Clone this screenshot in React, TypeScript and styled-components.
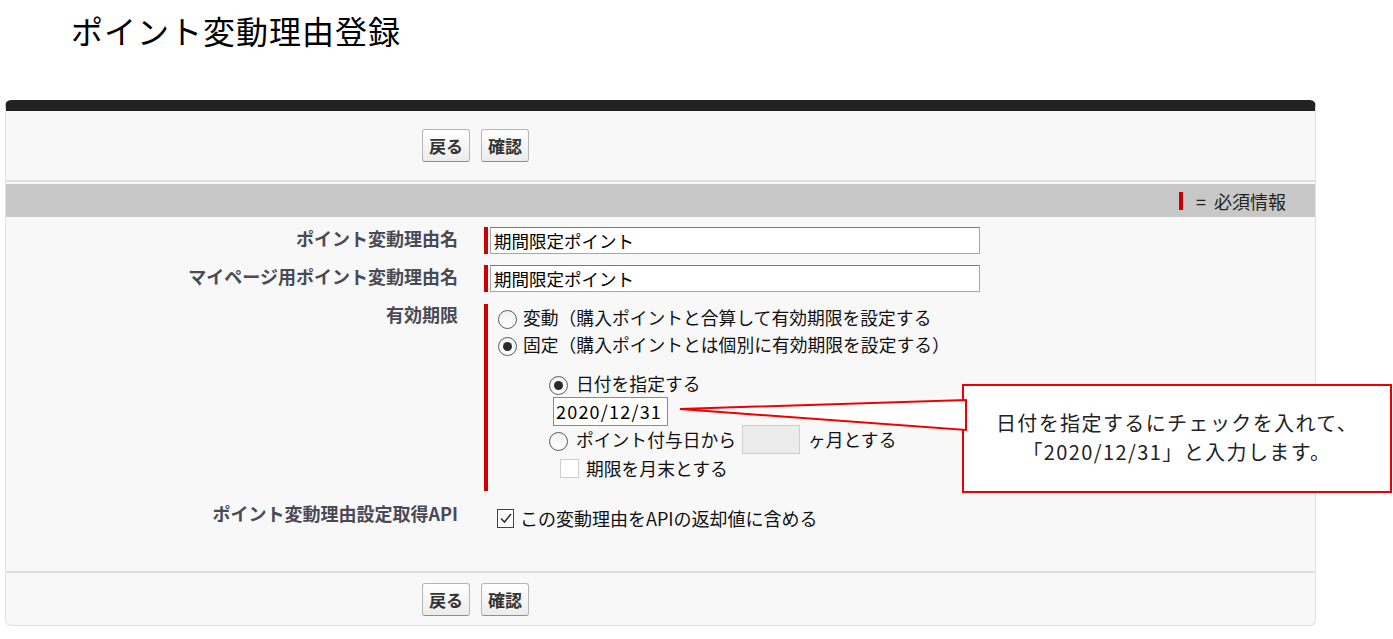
import React from 'react'
import styled, { createGlobalStyle } from 'styled-components'

const GlobalStyle = createGlobalStyle`
  html, body {
    margin: 0;
    padding: 0;
    background: #ffffff;
  }
  body {
    font-family: 'Noto Sans CJK JP', 'Noto Sans', 'Liberation Sans', sans-serif;
    color: #000;
  }
`

const FONT = `'Noto Sans CJK JP', 'Noto Sans', 'Liberation Sans', sans-serif`

export default function App() {
  return (
    <Page>
      <GlobalStyle />
      <Title>ポイント変動理由登録</Title>
      <Panel>
        <ButtonRow $top>
          <Button>戻る</Button>
          <Button>確認</Button>
        </ButtonRow>
        <SectionHeader>
          <Legend>
            <RequiredMark />
            <span>= 必須情報</span>
          </Legend>
        </SectionHeader>
        <Form>
          <Label>ポイント変動理由名</Label>
          <Field>
            <RequiredMark $tall />
            <TextInput>期間限定ポイント</TextInput>
          </Field>

          <Label>マイページ用ポイント変動理由名</Label>
          <Field>
            <RequiredMark $tall />
            <TextInput>期間限定ポイント</TextInput>
          </Field>

          <Label>有効期限</Label>
          <RequiredBlock>
            <OptionLine>
              <Radio />
              <span>変動（購入ポイントと合算して有効期限を設定する</span>
            </OptionLine>
            <OptionLine>
              <Radio $checked />
              <span>固定（購入ポイントとは個別に有効期限を設定する）</span>
            </OptionLine>
            <Nested>
              <OptionLine $gap={8}>
                <Radio $checked />
                <span>日付を指定する</span>
              </OptionLine>
              <DateInput>2020/12/31</DateInput>
              <OptionLine $gap={8}>
                <Radio />
                <span>ポイント付与日から</span>
                <MonthInput />
                <span>ヶ月とする</span>
              </OptionLine>
              <CheckLine>
                <CheckBox />
                <span>期限を月末とする</span>
              </CheckLine>
            </Nested>
          </RequiredBlock>

          <Label>ポイント変動理由設定取得API</Label>
          <ApiField>
            <CheckBox $checked>
              <svg width="14" height="14" viewBox="0 0 14 14">
                <path d="M2 7.5 L5.5 11 L12 3" fill="none" stroke="#333" strokeWidth="1.6" />
              </svg>
            </CheckBox>
            <span>この変動理由をAPIの返却値に含める</span>
          </ApiField>
        </Form>
        <ButtonRow>
          <Button>戻る</Button>
          <Button>確認</Button>
        </ButtonRow>
      </Panel>

      <Callout>
        <Pointer width="290" height="40" viewBox="0 0 290 40">
          <polygon points="2,25 288,16 288,46" fill="#fff" stroke="#ee0000" strokeWidth="2" />
        </Pointer>
        <CalloutText>
          <CalloutLine>日付を指定するにチェックを入れて、</CalloutLine>
          <CalloutLine>「2020/12/31」と入力します。</CalloutLine>
        </CalloutText>
      </Callout>
    </Page>
  )
}

const Page = styled.div`
  position: relative;
  width: 1393px;
  height: 639px;
  overflow: hidden;
  background: #fff;
`

const Title = styled.h1`
  margin: 0;
  box-sizing: border-box;
  height: 100px;
  padding: 10px 0 0 71px;
  font-family: ${FONT};
  font-size: 32px;
  line-height: 40px;
  font-weight: 400;
  color: #000;
  letter-spacing: 1px;
`

const Panel = styled.div`
  box-sizing: border-box;
  width: 1311px;
  margin-left: 5px;
  background: #f8f8f8;
  border: 1px solid #e2e2e2;
  border-top: 11px solid #222;
  border-radius: 6px;
`

const ButtonRow = styled.div<{ $top?: boolean }>`
  display: flex;
  gap: 11px;
  box-sizing: border-box;
  padding-left: 416px;
  height: ${({ $top }) => ($top ? '71px' : '54px')};
  padding-top: ${({ $top }) => ($top ? '18px' : '10px')};
  ${({ $top }) =>
    $top
      ? 'border-bottom: 2px solid #dedede;'
      : 'border-top: 2px solid #dedede;'}
`

const Button = styled.button`
  height: 33px;
  padding: 0 6px;
  font-family: ${FONT};
  font-size: 17px;
  font-weight: 700;
  color: #333;
  background: linear-gradient(#ffffff, #ececec);
  border: 1px solid #b5b5b5;
  border-bottom-color: #8f8f8f;
  border-radius: 3px;
  line-height: 1;
`

const SectionHeader = styled.div`
  display: flex;
  justify-content: flex-end;
  align-items: center;
  height: 33px;
  margin-top: 2px;
  padding-right: 29px;
  background: #c8c8c8;
`

const Legend = styled.div`
  display: flex;
  align-items: center;
  gap: 13px;
  font-family: ${FONT};
  font-size: 18px;
  color: #222;
  word-spacing: 4px;
`

const RequiredMark = styled.span<{ $tall?: boolean }>`
  display: block;
  width: 4px;
  height: ${({ $tall }) => ($tall ? '27px' : '18px')};
  background: #c00;
  flex-shrink: 0;
`

const Form = styled.div`
  display: grid;
  grid-template-columns: 452px 1fr;
  column-gap: 26px;
  row-gap: 11px;
  padding: 10px 0 40px;
`

const Label = styled.div`
  text-align: right;
  font-family: ${FONT};
  font-size: 18px;
  line-height: 22px;
  font-weight: 700;
  color: #4a4a56;
`

const Field = styled.div`
  display: flex;
  align-items: flex-start;
  gap: 2px;
`

const TextInput = styled.div`
  box-sizing: border-box;
  width: 490px;
  height: 27px;
  padding: 0 3px;
  background: #fff;
  border: 1px solid #a5a5a5;
  border-top-color: #7a7a7a;
  font-family: ${FONT};
  font-size: 17.5px;
  line-height: 25px;
  color: #000;
`

const RequiredBlock = styled.div`
  border-left: 4px solid #c00;
  padding: 0 0 8px 10px;
  margin-top: 1px;
  font-family: ${FONT};
  font-size: 17.8px;
  color: #111;
`

const OptionLine = styled.div<{ $gap?: number }>`
  display: flex;
  align-items: center;
  gap: ${({ $gap }) => $gap ?? 6}px;
  height: 27px;
  line-height: 27px;
  white-space: nowrap;
`

const Radio = styled.span<{ $checked?: boolean }>`
  position: relative;
  box-sizing: border-box;
  display: inline-block;
  width: 19px;
  height: 19px;
  margin-top: 4px;
  border-radius: 50%;
  border: 1px solid #5a5a5a;
  background: linear-gradient(#f2f2f2, #ffffff);
  flex-shrink: 0;

  &::after {
    content: '';
    display: ${({ $checked }) => ($checked ? 'block' : 'none')};
    position: absolute;
    left: 4px;
    top: 4px;
    width: 9px;
    height: 9px;
    border-radius: 50%;
    background: #2a2a2a;
  }
`

const Nested = styled.div`
  padding: 12px 0 0 51px;
`

const DateInput = styled.div`
  box-sizing: border-box;
  width: 115px;
  height: 29px;
  margin: 0 0 0 4px;
  padding: 0 2px;
  background: #fff;
  border: 1px solid #8a8a8a;
  font-size: 18px;
  letter-spacing: 1.2px;
  line-height: 27px;
  color: #000;
`

const MonthInput = styled.span`
  display: inline-block;
  box-sizing: border-box;
  width: 58px;
  height: 29px;
  margin: 0 0 0 -2px;
  background: #ececec;
  border: 1px solid #cfcfcf;
`

const CheckLine = styled.div`
  display: flex;
  align-items: center;
  gap: 7px;
  height: 30px;
  padding-left: 11px;
  white-space: nowrap;
`

const CheckBox = styled.span<{ $checked?: boolean }>`
  box-sizing: border-box;
  display: inline-flex;
  align-items: center;
  justify-content: center;
  width: ${({ $checked }) => ($checked ? '17px' : '19px')};
  height: 19px;
  background: #fff;
  border: 1px solid ${({ $checked }) => ($checked ? '#444' : '#cfcfcf')};
  flex-shrink: 0;
`

const ApiField = styled.div`
  display: flex;
  align-items: center;
  gap: 6px;
  padding: 3px 0 0 13px;
  font-family: ${FONT};
  font-size: 18px;
  color: #111;
  white-space: nowrap;
`

const Callout = styled.div`
  position: absolute;
  left: 962px;
  top: 384px;
  box-sizing: border-box;
  width: 430px;
  height: 109px;
  background: #fff;
  border: 2px solid #ee0000;
  display: flex;
  align-items: center;
  justify-content: center;
`

const Pointer = styled.svg`
  position: absolute;
  right: 100%;
  top: 0;
  margin-right: -4px;
  overflow: visible;
  transform: translateY(-2px);
`

const CalloutText = styled.div`
  position: relative;
  display: flex;
  flex-direction: column;
  align-items: center;
  margin-top: -3px;
`

const CalloutLine = styled.div`
  font-family: ${FONT};
  font-size: 20px;
  line-height: 29px;
  letter-spacing: 1.4px;
  color: #222;
  white-space: nowrap;
`
